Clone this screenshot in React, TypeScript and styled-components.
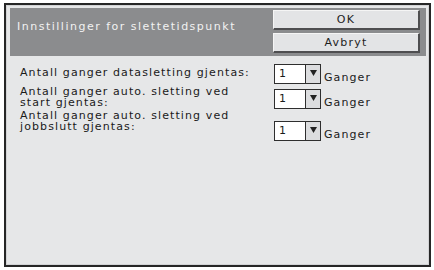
import styled, { createGlobalStyle } from 'styled-components';

const GlobalStyle = createGlobalStyle`
  html, body {
    margin: 0;
    padding: 0;
    background: #ffffff;
  }
  body {
    font-family: "DejaVu Sans", "Liberation Sans", sans-serif;
    font-size: 11px;
  }
`;

const Page = styled.div`
  width: 434px;
  height: 270px;
  padding: 3px 0 0 4px;
  box-sizing: border-box;
`;

const Frame = styled.div`
  width: 427px;
  height: 264px;
  box-sizing: border-box;
  border: 2px solid #262626;
  background: #e6e7e8;
  padding: 3px 3px 0 4px;
  box-shadow: inset 0 0 0 1px #d2d3d5;
`;

const Header = styled.div`
  height: 48px;
  background: #8b8c8e;
  display: flex;
  justify-content: space-between;
  padding: 2px 6px 0 7px;
  box-sizing: border-box;
`;

const Title = styled.div`
  color: #f2f2f2;
  letter-spacing: 1.5px;
  padding-top: 10px;
`;

const ButtonStack = styled.div`
  display: flex;
  flex-direction: column;
  gap: 3px;
`;

const Button = styled.div`
  width: 147px;
  height: 20px;
  box-sizing: border-box;
  background: #e3e4e6;
  border-top: 1px solid #f5f5f5;
  border-left: 1px solid #f5f5f5;
  border-right: 2px solid #4e4e50;
  border-bottom: 2px solid #4e4e50;
  color: #1e1e1e;
  letter-spacing: 1.2px;
  display: flex;
  align-items: center;
  justify-content: center;
`;

const Body = styled.div`
  padding: 8px 0 0 10px;
  display: flex;
  flex-direction: column;
`;

const Row = styled.div<{ $gap: number }>`
  display: flex;
  align-items: flex-start;
  margin-top: ${p => p.$gap}px;
`;

const Label = styled.div<{ $top: number }>`
  width: 254px;
  box-sizing: border-box;
  padding: ${p => p.$top}px 10px 0 0;
  line-height: 11px;
  color: #1a1a1a;
  letter-spacing: 1.1px;
`;

const Control = styled.div<{ $top: number }>`
  display: flex;
  align-items: flex-end;
  margin-top: ${p => p.$top}px;
`;

const Select = styled.div`
  display: flex;
  width: 47px;
  height: 20px;
  box-sizing: border-box;
  border: 1px solid #2e2e2e;
  background: #ffffff;
`;

const SelectValue = styled.div`
  flex: 1;
  padding-left: 4px;
  line-height: 18px;
  color: #1a1a1a;
  border-right: 1px solid #2e2e2e;
`;

const SelectArrow = styled.div`
  width: 14px;
  background: #dcdddf;
  display: flex;
  justify-content: center;
  padding-top: 5px;
  box-sizing: border-box;
`;

const Unit = styled.div`
  margin-left: 3px;
  line-height: 11px;
  padding-bottom: 1px;
  color: #1a1a1a;
  letter-spacing: 1.1px;
`;

const Arrow = () => (
  <svg width="7" height="6" viewBox="0 0 7 6">
    <polygon points="0,0 7,0 3.5,6" fill="#222" />
  </svg>
);

const rows = [
  { label: 'Antall ganger datasletting gjentas:', gap: 0, labelTop: 3, boxTop: 0 },
  { label: 'Antall ganger auto. sletting ved start gjentas:', gap: 2, labelTop: 0, boxTop: 3 },
  { label: 'Antall ganger auto. sletting ved jobbslutt gjentas:', gap: 1, labelTop: 0, boxTop: 11 },
];

function App() {
  return (
    <>
      <GlobalStyle />
      <Page>
        <Frame>
          <Header>
            <Title>Innstillinger for slettetidspunkt</Title>
            <ButtonStack>
              <Button>OK</Button>
              <Button>Avbryt</Button>
            </ButtonStack>
          </Header>
          <Body>
            {rows.map(r => (
              <Row key={r.label} $gap={r.gap}>
                <Label $top={r.labelTop}>{r.label}</Label>
                <Control $top={r.boxTop}>
                  <Select>
                    <SelectValue>1</SelectValue>
                    <SelectArrow><Arrow /></SelectArrow>
                  </Select>
                  <Unit>Ganger</Unit>
                </Control>
              </Row>
            ))}
          </Body>
        </Frame>
      </Page>
    </>
  );
}

export default App;
